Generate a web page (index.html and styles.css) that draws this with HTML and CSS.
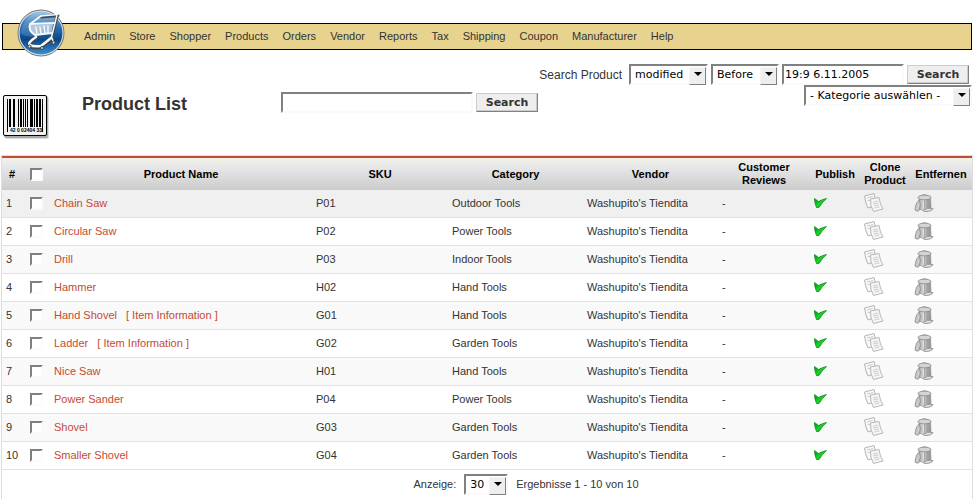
FILE: index.html
```html
<!DOCTYPE html>
<html lang="de">
<head>
<meta charset="utf-8">
<title>Product List</title>
<link rel="stylesheet" href="styles.css">
</head>
<body>
<svg class="defs" aria-hidden="true">
  <defs>
    <linearGradient id="green" x1="0" y1="0" x2="1" y2="1"><stop offset="0" stop-color="#008a10"/><stop offset=".5" stop-color="#16d42a"/><stop offset="1" stop-color="#00a010"/></linearGradient>
    <linearGradient id="steel"><stop offset="0" stop-color="#999"/><stop offset=".3" stop-color="#eee"/><stop offset=".55" stop-color="#bbb"/><stop offset="1" stop-color="#8a8a8a"/></linearGradient>
    <symbol id="check" viewBox="0 0 13 12"><path d="M.5 1.500L4.500 4.500Q8 2.500 12.500 1.500Q8 5.500 5 10.500H2.500Q.5 6 .5 1.500Z" fill="url(#green)" stroke="#168a20" stroke-width=".8"/></symbol>
    <symbol id="clone" viewBox="0 0 20 20"><g fill="#f7f7f7" stroke="#b5b5b5" stroke-width="1"><path d="M.5 3L10 .5L13 12L4 15Q1 9 .5 3Z"/><path d="M6.500 6L15 4.500Q16 12 19 16L9.500 18.500Q6 13 6.500 6Z"/></g><path d="M3 5L9 3.500M3.500 7.500H6M9 9L14 8M9 11L14.500 10M10 13L15 12M10.500 15L15.500 14" stroke="#ccc" fill="none"/></symbol>
    <symbol id="trash" viewBox="0 0 20 20"><path d="M5 5L5 16Q10 19 17 16L16.500 4Z" fill="url(#steel)" stroke="#999" stroke-width=".8"/><path d="M8 7V16M10.500 7V17M13 7V16" stroke="#999" stroke-width=".7"/><ellipse cx="10.500" cy="4.500" rx="6.500" ry="2.300" fill="#d5d5d5" stroke="#888" stroke-width=".8"/><path d="M8 2.500Q10.500 .5 13 2.500" fill="none" stroke="#999"/><path d="M1 17Q2 8 5.500 7.500Q7.500 12 5 17.500Q3 19 1 17Z" fill="#c9c9c9" stroke="#888" stroke-width=".8"/><path d="M9 17.500Q13 14 19 15.500Q18 18.500 11 18.500Z" fill="#ddd" stroke="#888" stroke-width=".8"/></symbol>
  </defs>
</svg>
<header class="menubar">
  <a class="logo" href="#" aria-label="Shop">
    <svg viewBox="0 0 48 48" aria-hidden="true">
      <defs><linearGradient id="blue" x1="0" y1="0" x2="0" y2="1"><stop offset="0" stop-color="#93bde0"/><stop offset=".25" stop-color="#3a80bc"/><stop offset=".5" stop-color="#175da0"/><stop offset=".65" stop-color="#0c4584"/><stop offset="1" stop-color="#3c90d2"/></linearGradient></defs>
      <circle cx="24" cy="24" r="23.500" fill="#777"/><circle cx="24" cy="24" r="22.500" fill="#dce5ee"/><circle cx="24" cy="24" r="21.500" fill="url(#blue)"/>
      <path d="M3 24Q8 5 24 3Q37 3 42 14Q24 17 19 27Q10 29 3 24Z" fill="#fff" opacity=".15"/>
      <path d="M12 16L36 15L35 23L18 27Q12 23 12 16Z" fill="#d5dfe8" opacity=".75"/>
      <g fill="none" stroke="#42474d" stroke-linecap="round" stroke-linejoin="round"><path d="M24 8L41 6.500M40 7L35 28L37 33" stroke-width="3"/><path d="M19 29Q10 35 13 37T24 38L34 30" stroke-width="4"/></g>
      <g fill="none" stroke="#f5f7f9" stroke-linecap="round" stroke-linejoin="round"><path d="M24 7L41 5.500M40 6L34.500 28L36.500 33" stroke-width="1.500"/><path d="M24 7L13 15Q11 22 18 26L35 24M13 15L37 14" stroke-width="2"/><path d="M19 18L20 26M23 18L24 25M27 17L28 24M31 17V24" stroke-width="1.500"/><path d="M19 28Q10 34 13 36T24 37L34 29" stroke-width="2.500"/></g>
      <g fill="#ddd" stroke="#345"><circle cx="12.500" cy="37.500" r="1.500"/><circle cx="25" cy="39" r="1.500"/><circle cx="36.500" cy="33.500" r="1.500"/></g>
    </svg>
  </a>
  <nav class="menu">
    <a href="#">Admin</a><a href="#">Store</a><a href="#">Shopper</a><a href="#">Products</a><a href="#">Orders</a><a href="#">Vendor</a><a href="#">Reports</a><a href="#">Tax</a><a href="#">Shipping</a><a href="#">Coupon</a><a href="#">Manufacturer</a><a href="#">Help</a>
  </nav>
</header>
<main>
  <section class="toolbar">
    <svg class="barcode" viewBox="0 0 48 46" aria-hidden="true">
      <rect x="2" y="2" width="44" height="42" rx="2" fill="#ddd"/><rect x="1" y="1" width="44" height="42" rx="2" fill="#aaa"/>
      <rect x=".5" y=".5" width="43" height="40" rx="1.500" fill="#f2f2f2" stroke="#000"/>
      <path d="M4 4h1v33h-1zM6 4h2v28h-2zM10 4h2v28h-2zM15 4h1v28h-1zM17 4h2v28h-2zM20 4h1v28h-1zM22 4h1v28h-1zM24 4h1v28h-1zM27 4h3v28h-3zM31 4h1v28h-1zM33 4h2v28h-2zM36 4h2v28h-2zM39 4h1v33h-1z"/>
      <text x="7" y="37" class="digits">42 0 02404 33</text>
    </svg>
    <h1>Product List</h1>
    <form class="search">
      <input class="field keyword" type="text" aria-label="Keyword">
      <button class="btn" type="button">Search</button>
    </form>
    <form class="filters">
      <div class="filter-row">
        <label for="mode">Search Product</label>
        <span class="pick mode"><select id="mode"><option>modified</option></select></span>
        <span class="pick when"><select aria-label="When"><option>Before</option></select></span>
        <input class="field date" type="text" value="19:9 6.11.2005" aria-label="Date">
        <button class="btn" type="button">Search</button>
      </div>
      <span class="pick category"><select aria-label="Kategorie"><option>- Kategorie auswählen -</option></select></span>
    </form>
  </section>
  <table class="products">
    <colgroup><col class="c-num"><col class="c-num"><col><col class="c-sku"><col class="c-mid"><col class="c-mid"><col class="c-reviews"><col class="c-icon"><col class="c-icon"><col class="c-remove"></colgroup>
    <thead><tr><th>#</th><th><input type="checkbox" aria-label="All"></th><th>Product Name</th><th>SKU</th><th>Category</th><th>Vendor</th><th>Customer Reviews</th><th>Publish</th><th>Clone Product</th><th>Entfernen</th></tr></thead>
    <tbody id="rows"></tbody>
  </table>
  <footer class="pager">
    <label for="limit">Anzeige:</label>
    <span class="pick limit"><select id="limit"><option>30</option></select></span>
    <span>Ergebnisse 1 - 10 von 10</span>
  </footer>
</main>
<script src="script.js"></script>
</body>
</html>
```
FILE: script.js
```js
const products = [
  ["Chain Saw", "P01", "Outdoor Tools"],
  ["Circular Saw", "P02", "Power Tools"],
  ["Drill", "P03", "Indoor Tools"],
  ["Hammer", "H02", "Hand Tools"],
  ["Hand Shovel", "G01", "Hand Tools", true],
  ["Ladder", "G02", "Garden Tools", true],
  ["Nice Saw", "H01", "Hand Tools"],
  ["Power Sander", "P04", "Power Tools"],
  ["Shovel", "G03", "Garden Tools"],
  ["Smaller Shovel", "G04", "Garden Tools"]
];

const action = (name, label) =>
  `<td><a class="action" href="#" aria-label="${label}"><svg class="${name}"><use href="#${name}"/></svg></a></td>`;

document.getElementById("rows").innerHTML = products.map(([name, sku, category, info], i) => `
  <tr>
    <td>${i + 1}</td>
    <td><input type="checkbox" aria-label="${name}"></td>
    <td><a href="#">${name}</a>${info ? '<a class="info" href="#">[ Item Information ]</a>' : ""}</td>
    <td>${sku}</td><td>${category}</td><td>Washupito's Tiendita</td><td>-</td>
    ${action("check", "Publish")}${action("clone", "Clone")}${action("trash", "Entfernen")}
  </tr>`).join("");
```
FILE: styles.css
```css
* { box-sizing: border-box; }

body {
  display: flex;
  flex-direction: column;
  min-height: 100vh;
  margin: 0 2px 0 1px;
  padding-top: 23px;
  background: #fff;
  color: #333;
  font: 11px/14px "Liberation Sans", Arial, sans-serif;
}

main { display: flex; flex: 1; flex-direction: column; }

a { color: #c64934; text-decoration: none; }

.defs { position: absolute; width: 0; height: 0; }

.menubar {
  position: relative;
  display: flex;
  align-items: center;
  height: 27px;
  margin: 0 1px 14px 1px;
  padding: 0 0 2px 81px;
  background: #e7d38e;
  border: 1px solid #000;
}

.logo { position: absolute; left: 14px; top: -15px; width: 48px; height: 48px; }
.logo svg { display: block; width: 48px; height: 48px; }
.menu { display: flex; gap: 14px; }
.menu a { color: #333; }

.toolbar { display: flex; align-items: flex-start; min-height: 91px; padding: 0 1px 0 2px; }
.barcode { flex: none; width: 48px; height: 46px; margin: 31px 31px 0 0; }
.digits { font: bold 5px "Liberation Sans", sans-serif; }

h1 { width: 199px; margin: 29px 0 0; font-size: 18px; line-height: 22px; }

.search { display: flex; align-items: center; gap: 3px; margin-top: 28px; }
.filters { display: flex; flex-direction: column; align-items: flex-end; margin-left: auto; }
.filter-row { display: flex; align-items: center; gap: 3px; margin-right: 3px; }
.filter-row label { margin-right: 4px; font-size: 12px; }

.field, select {
  height: 21px;
  margin: 0;
  background: #fff;
  border: 2px solid;
  border-color: #808080 #fafafa #fafafa #808080;
  border-radius: 0;
  color: #000;
  font: 11px "DejaVu Sans", sans-serif;
}

.field { padding: 0 1px; }
.keyword { width: 192px; }
.date { width: 122px; }

.btn {
  width: 62px;
  height: 19px;
  padding: 0;
  background: #eee;
  border: 1px solid;
  border-color: #ccc #808080 #808080 #ccc;
  box-shadow: inset -1px -1px #ccc;
  color: #333;
  font: bold 11px "DejaVu Sans", sans-serif;
}

.pick { position: relative; display: inline-flex; }
select { width: 100%; padding: 0 0 0 4px; appearance: none; }

.pick::before {
  content: "";
  position: absolute;
  top: 3px;
  right: 2px;
  width: 15px;
  height: 16px;
  background: #eee;
  border: 1px solid;
  border-color: #f5f5f5 #808080 #808080 #f5f5f5;
  pointer-events: none;
}

.pick::after {
  content: "";
  position: absolute;
  top: 8px;
  right: 6px;
  border: 4px solid transparent;
  border-top-color: #000;
  border-bottom: 0;
  pointer-events: none;
}

.mode { width: 79px; }
.when { width: 68px; }
.category { width: 168px; }
.limit { width: 44px; }

.products {
  width: 100%;
  table-layout: fixed;
  border-collapse: separate;
  border-spacing: 0;
  border: 1px solid #ddd;
  border-bottom: 0;
}

.c-num { width: 24px; }
.c-sku { width: 136px; }
.c-mid { width: 135px; }
.c-reviews { width: 92px; }
.c-icon { width: 50px; }
.c-remove { width: 62px; }

th, td { padding: 0 4px; vertical-align: middle; }

thead tr { background: linear-gradient(#f0f0e6 0 5px, #eee 5px, #ccc); }
th { height: 34px; border-top: 2px solid #c64934; color: #000; line-height: 13px; white-space: normal; }
th:first-child { padding-right: 8px; }

td { height: 28px; padding-bottom: 1px; border-bottom: 1px solid #e2e2e2; text-align: left; white-space: nowrap; }
tbody tr:nth-child(odd) { background: #f9f9f9; }
tbody tr:nth-child(even) { background: #fff; }
tbody tr:first-child { background: #f0f0f0; }

input[type="checkbox"] {
  display: block;
  width: 13px;
  height: 13px;
  margin: 0;
  appearance: none;
  background: #fff;
  border: 2px solid;
  border-color: #808080 #fafafa #fafafa #808080;
}

.info { margin-left: 9px; }
.action { display: block; }
.action svg { display: block; width: 20px; height: 20px; }
.action .check { width: 13px; height: 12px; }

.pager {
  display: flex;
  flex: 1;
  align-items: flex-start;
  justify-content: center;
  gap: 8px;
  padding: 4px 0 0 78px;
  border: 1px solid #ddd;
  border-width: 0 1px;
  line-height: 21px;
}
```
